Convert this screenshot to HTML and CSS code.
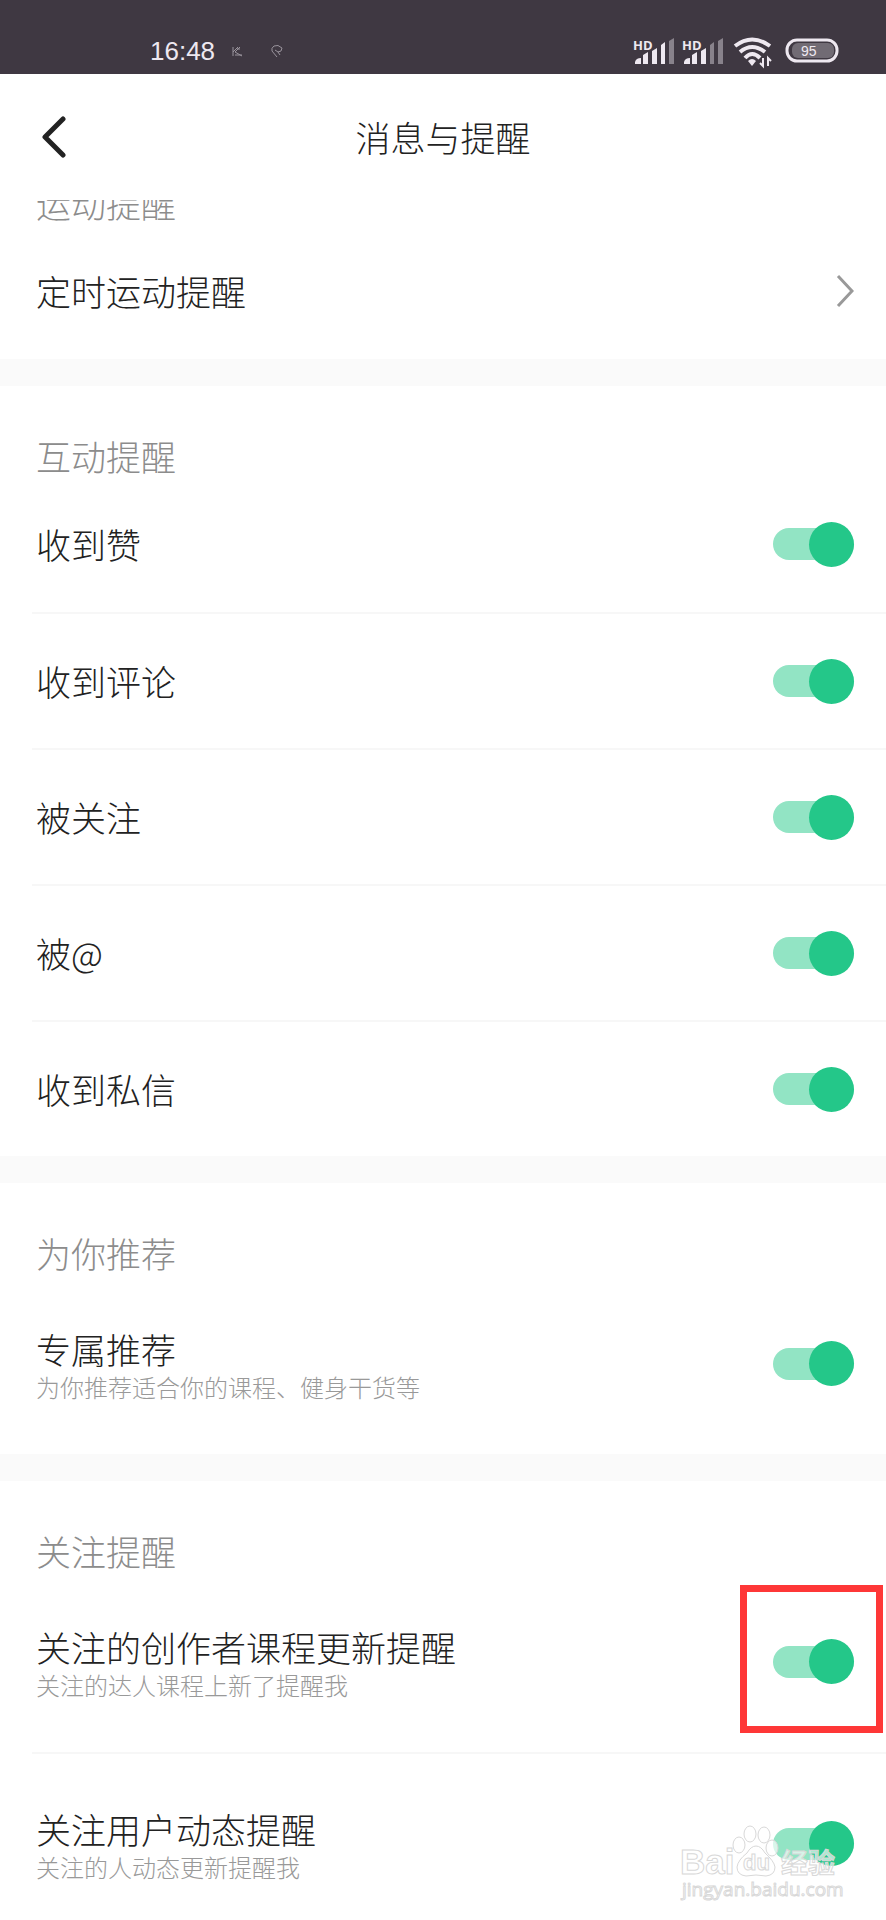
FILE: index.html
```html
<!DOCTYPE html>
<html lang="zh-CN">
<head>
    <meta charset="UTF-8">
    <meta name="viewport" content="width=device-width, initial-scale=1.0">
    <title>消息与提醒</title>
    <link rel="stylesheet" href="styles.css">
</head>
<body>
    <div class="screen">

        <!-- Status Bar -->
        <div class="status-bar">
            <div class="status-left">
                <span class="time">16:48</span>
                <svg class="status-mark" width="52" height="16" viewBox="0 0 52 16">
                    <path d="M2 4v9M7 4L2 9M9 4L4 9l7 4M6 6h3M4 12h7"/>
                    <path d="M46 14L41 8q-1-3 2-5q4-2 8 2q0 4-4 4l-3-2M47 9l2 3"/>
                </svg>
            </div>
            <div class="status-right">
                <svg width="42" height="30" viewBox="0 0 42 30">
                    <text class="hd" x="0" y="14">HD</text>
                    <path class="bar" d="M2 28v-2q1-4 6-4v6zM10 28V19l5-3v12zM19 28V15l5-3v16zM28 28V9l4-3v22z"/>
                    <path class="bar dim" d="M36 28V5l5-3v26z"/>
                </svg>
                <svg class="signal-two" width="42" height="30" viewBox="0 0 42 30">
                    <text class="hd" x="0" y="14">HD</text>
                    <path class="bar" d="M2 28v-2q1-4 6-4v6zM10 28V19l5-3v12zM19 28V15l5-3v16z"/>
                    <path class="bar dim" d="M28 28V9l4-3v22zM36 28V5l5-3v26z"/>
                </svg>
                <svg class="wifi" width="40" height="30" viewBox="0 0 40 30">
                    <path class="arc" d="M2 10Q19-3 37 10M7 16Q19 6 32 16M12 22Q19 14 27 22"/>
                    <path class="bar" d="M15 25q4-4 8 0l-4 5z"/>
                    <path class="arrows" d="M30 22v8l-3-3M35 30v-8l3 3"/>
                </svg>
                <svg class="battery" width="54" height="26" viewBox="0 0 54 26">
                    <rect class="battery-case" x="2" y="2" width="50" height="21" rx="10"/>
                    <rect class="battery-fill" x="7" y="5" width="42" height="15" rx="6"/>
                    <text class="level" x="16" y="18">95</text>
                </svg>
            </div>
        </div>

        <!-- Header -->
        <header class="header">
            <button class="back" type="button" aria-label="返回">
                <svg width="24" height="42" viewBox="0 0 24 42">
                    <path d="M21 3L3 21l18 18"/>
                </svg>
            </button>
            <h1>消息与提醒</h1>
        </header>

        <!-- Settings List -->
        <main class="list">
            <section class="section scrolled">
                <h2>运动提醒</h2>
                <a class="row" href="#">
                    <span class="name">定时运动提醒</span>
                    <svg class="chevron" width="18" height="34" viewBox="0 0 18 34">
                        <path d="M2 2l14 15L2 32"/>
                    </svg>
                </a>
            </section>

            <section class="section">
                <h2>互动提醒</h2>
                <label class="row">
                    <span class="name">收到赞</span>
                    <input class="switch" type="checkbox" checked>
                </label>
                <label class="row">
                    <span class="name">收到评论</span>
                    <input class="switch" type="checkbox" checked>
                </label>
                <label class="row">
                    <span class="name">被关注</span>
                    <input class="switch" type="checkbox" checked>
                </label>
                <label class="row">
                    <span class="name">被@</span>
                    <input class="switch" type="checkbox" checked>
                </label>
                <label class="row">
                    <span class="name">收到私信</span>
                    <input class="switch" type="checkbox" checked>
                </label>
            </section>

            <section class="section">
                <h2>为你推荐</h2>
                <label class="row tall">
                    <span class="text">
                        <span class="name">专属推荐</span>
                        <span class="desc">为你推荐适合你的课程、健身干货等</span>
                    </span>
                    <input class="switch" type="checkbox" checked>
                </label>
            </section>

            <section class="section">
                <h2>关注提醒</h2>
                <label class="row tall marked">
                    <span class="text">
                        <span class="name">关注的创作者课程更新提醒</span>
                        <span class="desc">关注的达人课程上新了提醒我</span>
                    </span>
                    <input class="switch" type="checkbox" checked>
                </label>
                <label class="row tall">
                    <span class="text">
                        <span class="name">关注用户动态提醒</span>
                        <span class="desc">关注的人动态更新提醒我</span>
                    </span>
                    <input class="switch" type="checkbox" checked>
                </label>
            </section>
        </main>

        <!-- Watermark -->
        <svg class="watermark" width="164" height="80" viewBox="0 0 164 80">
            <text class="brand" x="0" y="50">Bai</text>
            <ellipse cx="59" cy="21" rx="6" ry="8"/>
            <ellipse cx="70" cy="10" rx="6" ry="8"/>
            <ellipse cx="84" cy="11" rx="6" ry="8"/>
            <ellipse cx="92" cy="24" rx="6" ry="8"/>
            <path d="M76 22q5 0 9 7q9 8 10 14q0 8-9 9q-10-2-20 0q-9-1-9-9q1-7 10-14q4-7 9-7z"/>
            <text class="du" x="63" y="46">du</text>
            <text class="jingyan" x="101" y="49">经验</text>
            <text class="url" x="2" y="72">jingyan.baidu.com</text>
        </svg>
    </div>
</body>
</html>
```

FILE: styles.css
```css
/* Global Styles */
*, *::before, *::after {
    margin: 0;
    padding: 0;
    box-sizing: border-box;
}

body {
    font-family: "Noto Sans CJK SC", sans-serif;
    font-weight: 300;
    color: #222;
    background-color: #fff;
}

.screen {
    position: relative;
    display: flex;
    flex-direction: column;
    height: 100vh;
    overflow: hidden;
}

/* Status Bar */
.status-bar {
    display: flex;
    flex: none;
    justify-content: space-between;
    align-items: flex-end;
    height: 74px;
    padding: 0 47px 8px 150px;
    background-color: #3f3842;
}

.status-left, .status-right {
    display: flex;
    align-items: center;
}

.status-right svg {
    overflow: visible;
}

.time {
    font-family: "Liberation Sans", sans-serif;
    font-size: 26px;
    line-height: 30px;
    color: #eee8f0;
}

.status-mark {
    margin-left: 16px;
    fill: none;
    stroke: #99939c;
    stroke-width: 1;
}

.signal-two {
    margin-left: 7px;
}

.wifi {
    margin-left: 9px;
}

.battery {
    margin-left: 12px;
}

.hd {
    font-family: "Open Sans", sans-serif;
    font-size: 13px;
    font-weight: 700;
    fill: #eee8f0;
}

.bar {
    fill: #eee8f0;
}

.dim {
    fill: #88828b;
}

.arc {
    fill: none;
    stroke: #eee8f0;
    stroke-width: 4;
}

.arrows {
    fill: none;
    stroke: #eee8f0;
    stroke-width: 2;
}

.battery-case {
    fill: none;
    stroke: #eee8f0;
    stroke-width: 3;
}

.battery-fill {
    fill: #716b74;
}

.level {
    font-family: "Liberation Sans", sans-serif;
    font-size: 14px;
    fill: #eee8f0;
}

/* Header */
.header {
    display: grid;
    grid-template-columns: 80px 1fr 80px;
    flex: none;
    align-items: center;
    height: 126px;
}

.back {
    display: flex;
    justify-content: flex-end;
    padding-right: 14px;
    border: none;
    background: none;
    cursor: pointer;
}

.back path {
    fill: none;
    stroke: #222;
    stroke-width: 5;
    stroke-linecap: round;
    stroke-linejoin: round;
}

h1 {
    font-size: 35px;
    font-weight: 300;
    line-height: 42px;
    text-align: center;
}

/* Settings List */
.list {
    flex: 1;
    overflow: hidden;
}

.section {
    padding-top: 50px;
    border-bottom: 27px solid #fafafa;
}

.section:last-child {
    border-bottom: none;
}

/* First group is partly scrolled under the header */
.scrolled {
    margin-top: -67px;
}

h2 {
    padding-left: 36px;
    font-size: 35px;
    font-weight: 300;
    line-height: 40px;
    color: #8c8c8c;
}

.row {
    position: relative;
    display: flex;
    justify-content: space-between;
    align-items: center;
    height: 136px;
    margin-left: 32px;
    padding: 0 32px 0 4px;
    color: #222;
    text-decoration: none;
    cursor: pointer;
}

.row + .row {
    border-top: 2px solid #f7f7f7;
}

.tall {
    height: 181px;
}

.text {
    display: flex;
    flex-direction: column;
    padding-top: 4px;
}

.name {
    font-size: 35px;
    line-height: 42px;
}

.desc {
    font-size: 24px;
    line-height: 34px;
    color: #999;
}

.chevron path {
    fill: none;
    stroke: #999;
    stroke-width: 3;
}

/* Switch */
.switch {
    display: flex;
    flex: none;
    justify-content: flex-end;
    align-items: center;
    width: 81px;
    height: 32px;
    border-radius: 16px;
    background-color: #ddd;
    appearance: none;
    cursor: pointer;
}

.switch::before {
    content: "";
    flex: none;
    width: 45px;
    height: 45px;
    border-radius: 50%;
    background-color: #fff;
}

.switch:checked {
    background-color: #92e4c4;
}

.switch:checked::before {
    background-color: #24c789;
}

/* Red frame around the switch */
.marked::after {
    content: "";
    position: absolute;
    top: 14px;
    right: 3px;
    width: 143px;
    height: 148px;
    border: 7px solid #fe3737;
}

/* Watermark */
.watermark {
    position: absolute;
    right: 42px;
    bottom: 16px;
    fill: rgba(255, 255, 255, 0.65);
    stroke: #d8d8d8;
    stroke-width: 1;
    pointer-events: none;
}

.brand {
    font-family: "Liberation Sans", sans-serif;
    font-size: 35px;
    font-weight: 700;
}

.du {
    font-family: "Liberation Sans", sans-serif;
    font-size: 22px;
    font-weight: 700;
}

.jingyan {
    font-size: 27px;
    font-weight: 700;
}

.url {
    font-family: "Open Sans", sans-serif;
    font-size: 19px;
    font-weight: 400;
}
```
